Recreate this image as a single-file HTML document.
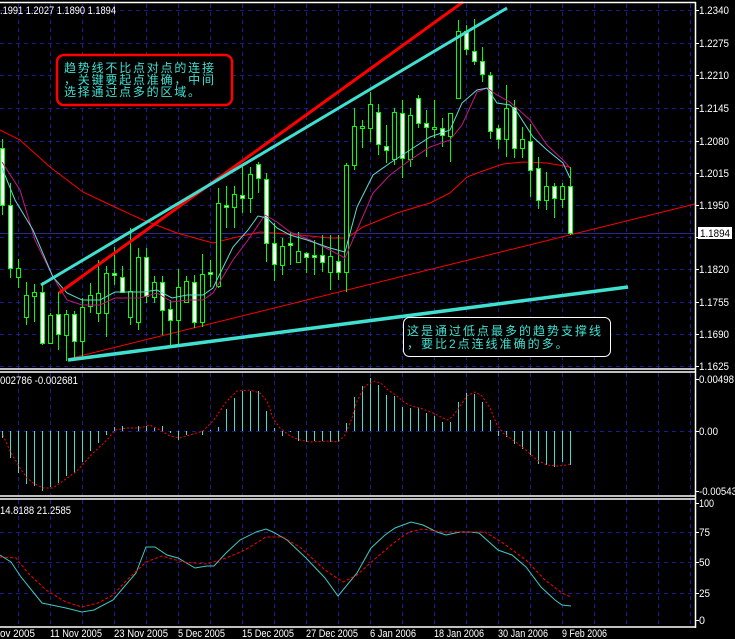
<!DOCTYPE html>
<html><head><meta charset="utf-8"><style>
html,body{margin:0;padding:0;background:#000;}
svg{display:block;}
text{font-family:"Liberation Sans","Noto Sans CJK SC",sans-serif;}
.ax{fill:#fff;font-size:11px;}
.cn{fill:#40e0d0;font-size:12px;letter-spacing:2px;font-family:"Liberation Sans","WenQuanYi Zen Hei","Noto Sans CJK SC",sans-serif;}
</style></head><body>
<svg id="s" width="735" height="639" viewBox="0 0 735 639" xmlns="http://www.w3.org/2000/svg">
<rect width="735" height="639" fill="#000"/>
<g id="grid" stroke="#1c1c8c" stroke-width="1" stroke-dasharray="4,4"></g>
<line x1="0" y1="233.5" x2="695" y2="233.5" stroke="#2a2a8c" stroke-width="1"/>
<polyline fill="none" stroke="#ff0000" stroke-width="1" points="0,130 20,140 50,167 83,192 100,200 117,208 143,220 177,233 213,243 233,238 260,232 300,235 330,238 347,238 363,227 397,213 430,203 450,193 467,177 480,172 503,164 523,162 547,163 570,167"/>
<line x1="68" y1="359" x2="695" y2="204" stroke="#ff0000" stroke-width="1"/>
<g id="candles"></g>
<polyline fill="none" stroke="#c71585" stroke-width="1" points="2,162 20,190 35,240 53,277 67,300 82,305 100,305 115,298 140,298 157,293 172,302 187,300 203,300 213,293 233,260 248,240 265,215 277,222 290,232 310,240 330,250 345,258 357,230 373,193 390,175 410,160 430,147 450,140 462,125 477,92 487,88 497,95 510,102 530,120 547,145 563,160 570,168"/>
<polyline fill="none" stroke="#5fd8d0" stroke-width="1" points="2,168 15,200 33,230 53,277 67,293 82,300 100,300 115,292 130,292 143,292 157,290 172,298 187,295 203,295 213,288 233,247 248,230 258,216 267,218 277,228 290,235 307,240 330,248 345,252 357,207 373,175 390,163 410,150 430,137 450,130 462,103 477,90 487,88 497,103 510,105 517,112 533,137 547,150 563,163 570,178"/>
<line x1="59" y1="293" x2="463" y2="2" stroke="#ff0000" stroke-width="3"/>
<line x1="41" y1="285" x2="507" y2="8" stroke="#40e0d0" stroke-width="3"/>
<line x1="68" y1="360" x2="628" y2="287" stroke="#40e0d0" stroke-width="3.5"/>
<rect x="57" y="55" width="175" height="50" rx="7" fill="#000" stroke="#ff0000" stroke-width="2.5"/>
<text class="cn" x="64" y="72" textLength="152" lengthAdjust="spacing">趋势线不比点对点的连接</text>
<text class="cn" x="64" y="84" textLength="152" lengthAdjust="spacing">，关键要起点准确，中间</text>
<text class="cn" x="64" y="96" textLength="138" lengthAdjust="spacing">选择通过点多的区域。</text>
<rect x="403.5" y="317.5" width="207" height="39" rx="6" fill="#000" stroke="#fff" stroke-width="1"/>
<text class="cn" x="407" y="335" textLength="196" lengthAdjust="spacing">这是通过低点最多的趋势支撑线</text>
<text class="cn" x="407" y="348">，要比2点连线准确的多。</text>
<g id="hist" stroke="#40e0d0" stroke-width="1"></g>
<polyline fill="none" stroke="#ff0000" stroke-width="1" stroke-dasharray="2,2" points="3,435 10,451 20,468 27,478 33,483 43,488 53,488 63,481 77,471 93,453 107,440 115,430 127,428 140,428 150,425 160,430 170,436 180,438 193,434 203,431 213,421 227,401 237,391 250,390 260,393 267,401 273,418 280,428 290,436 300,440 310,442 330,441 338,442 345,435 352,418 357,401 365,386 375,381 382,384 388,390 397,396 405,403 412,406 423,409 433,413 443,418 448,420 453,416 460,406 467,396 475,392 482,396 490,408 497,425 503,433 517,443 527,451 537,460 547,465 557,466 567,465 570,464"/>
<polyline fill="none" stroke="#40c8c0" stroke-width="1" points="0,555 11,562 21,577 42,603 66,608 82,612 94,610 113,600 124,587 136,573 146,547 155,547 167,555 178,558 195,568 207,566 214,566 226,553 240,540 256,532 266,529 273,532 287,540 306,558 325,578 338,596 357,573 371,548 385,535 395,528 411,522 423,525 437,532 446,535 460,532 470,532 479,533 498,550 512,555 526,567 541,587 555,600 562,605 571,606"/>
<polyline fill="none" stroke="#ff0000" stroke-width="1" stroke-dasharray="3,2" points="0,557 16,558 28,573 46,590 66,602 82,607 98,603 113,595 127,580 146,562 162,556 183,562 207,564 226,558 245,550 266,537 283,537 301,548 325,570 343,582 357,575 376,558 395,542 409,532 423,529 442,532 466,532 485,532 503,543 526,560 545,580 562,593 571,597"/>
<g stroke="#fff" stroke-width="1.5" fill="none">
<line x1="0" y1="2.5" x2="696" y2="2.5"/>
<line x1="0" y1="369" x2="696" y2="369"/>
<line x1="0" y1="372" x2="696" y2="372"/>
<line x1="0" y1="496" x2="696" y2="496"/>
<line x1="0" y1="499" x2="696" y2="499"/>
<line x1="0" y1="627" x2="696" y2="627"/>
<line x1="695.5" y1="2" x2="695.5" y2="628"/>
</g>
<g id="ticks" stroke="#fff" stroke-width="1"></g>
<g class="ax">
<text x="0" y="14" textLength="116" lengthAdjust="spacingAndGlyphs">.1991 1.2027 1.1890 1.1894</text>
<text x="0" y="384" textLength="78" lengthAdjust="spacingAndGlyphs">002786  -0.002681</text>
<text x="0" y="514" textLength="71" lengthAdjust="spacingAndGlyphs">14.8188  21.2585</text>
</g>
<g class="ax" id="pax"></g>
<rect x="698" y="227" width="34" height="12" fill="#fff"/>
<text x="700" y="237" style="font-size:11px;fill:#000" textLength="30" lengthAdjust="spacingAndGlyphs">1.1894</text>
<g class="ax" id="dax"></g>
</svg>
<script>
var NS="http://www.w3.org/2000/svg";
function el(p,t,a,txt){var e=document.createElementNS(NS,t);for(var k in a)e.setAttribute(k,a[k]);if(txt)e.textContent=txt;p.appendChild(e);return e;}
var g=document.getElementById("grid");
for(var x=18.5;x<695;x+=32){el(g,"line",{x1:x,y1:4,x2:x,y2:368});el(g,"line",{x1:x,y1:373,x2:x,y2:495});el(g,"line",{x1:x,y1:500,x2:x,y2:626});}
[10,43,75,108,141,173,205,237,269,302,334,366].forEach(function(y){el(g,"line",{x1:0,y1:y+.5,x2:695,y2:y+.5});});
[431,532,562,593].forEach(function(y){el(g,"line",{x1:0,y1:y+.5,x2:695,y2:y+.5});});
var t=document.getElementById("ticks");
[10,43,75,108,141,173,205,237,269,302,334,366,379,431,491,503,532,562,593,620].forEach(function(y){el(t,"line",{x1:695,y1:y+.5,x2:699,y2:y+.5});});
var P=[["1.2340",14,30],["1.2275",47,30],["1.2210",79,30],["1.2145",112,30],["1.2080",145,30],["1.2015",177,30],["1.1950",209,30],["1.1820",273,30],["1.1755",306,30],["1.1690",338,30],["1.1625",370,30],["0.00498",383,35],["0.00",435,19],["-0.00543",495,38],["100",507,15],["75",536,11],["50",566,11],["25",597,11],["0",624,6]];
var pa=document.getElementById("pax");
P.forEach(function(p){el(pa,"text",{x:699,y:p[1],textLength:p[2],lengthAdjust:"spacingAndGlyphs"},p[0]);});
var D=[["ov 2005",0,35],["11 Nov 2005",50,52],["23 Nov 2005",114,54],["5 Dec 2005",178,47],["15 Dec 2005",242,52],["27 Dec 2005",306,52],["6 Jan 2006",370,46],["18 Jan 2006",434,50],["30 Jan 2006",498,50],["9 Feb 2006",562,45]];
var da=document.getElementById("dax");
D.forEach(function(d){el(da,"text",{x:d[1],y:637,textLength:d[2],lengthAdjust:"spacingAndGlyphs"},d[0]);});
var C=[[148,205,139,215,1],[205,268,183,278,1],[268,277,259,288,0],[295,317,282,325,0],[292,296,284,322,0],[292,343,282,345,1],[315,343,313,344,0],[314,334,292,350,1],[314,335,310,361,0],[314,341,311,358,1],[307,341,298,357,0],[295,306,283,313,0],[293,313,260,322,0],[273,313,266,337,0],[273,275,247,285,1],[277,292,266,293,1],[291,317,228,325,0],[257,322,248,330,0],[257,296,248,303,1],[282,297,276,303,0],[282,310,276,335,1],[309,320,300,347,1],[287,320,269,345,0],[281,302,276,302,0],[282,322,275,328,1],[274,322,254,327,0],[272,274,260,287,1],[203,286,188,288,0],[205,207,186,228,1],[194,207,186,228,0],[195,198,167,213,1],[174,198,167,213,0],[164,178,162,193,1],[179,243,173,262,1],[243,264,223,281,1],[246,265,238,275,0],[243,245,232,265,1],[251,262,232,263,0],[253,257,252,273,1],[255,257,240,275,1],[255,262,235,272,1],[256,272,235,290,0],[261,272,235,280,1],[165,272,163,292,0],[126,165,108,170,0],[126,128,120,148,0],[104,128,92,142,0],[112,144,104,155,1],[146,150,125,163,1],[112,159,108,165,0],[113,158,100,178,1],[115,159,108,167,0],[98,123,95,128,1],[123,127,110,157,1],[127,129,100,138,0],[128,135,118,147,1],[113,136,113,162,0],[31,98,20,99,0],[31,49,25,55,1],[51,61,19,65,1],[61,74,47,82,1],[75,131,72,139,1],[128,139,125,149,1],[108,139,85,157,0],[107,148,100,158,1],[139,148,127,158,0],[141,170,124,197,1],[168,200,157,209,1],[186,200,172,210,0],[186,198,183,218,1],[186,199,183,208,0],[186,233,167,235,1]];
var cg=document.getElementById("candles");
C.forEach(function(c,i){var x=2+8*i;
el(cg,"line",{x1:x+.5,y1:c[2],x2:x+.5,y2:c[3],stroke:"#00ff00","stroke-width":1});
el(cg,"rect",{x:x-1.5,y:c[0]+.5,width:4,height:Math.max(1,c[1]-c[0]),fill:c[4]?"#fff":"#000",stroke:"#00ff00","stroke-width":1});});
var H=[438,458,473,484,486,491,487,483,476,473,462,451,443,435,427,426,431,426,426,428,426,433,440,435,431,435,430,427,409,398,391,391,391,411,428,436,432,441,442,441,441,442,442,423,397,386,378,385,395,396,407,408,408,413,416,422,422,402,393,394,402,420,436,437,444,449,455,464,465,467,462,465];
var hg=document.getElementById("hist");
H.forEach(function(y,i){var x=2+8*i+.5;el(hg,"line",{x1:x,y1:431,x2:x,y2:y});});
</script>
</body></html>
